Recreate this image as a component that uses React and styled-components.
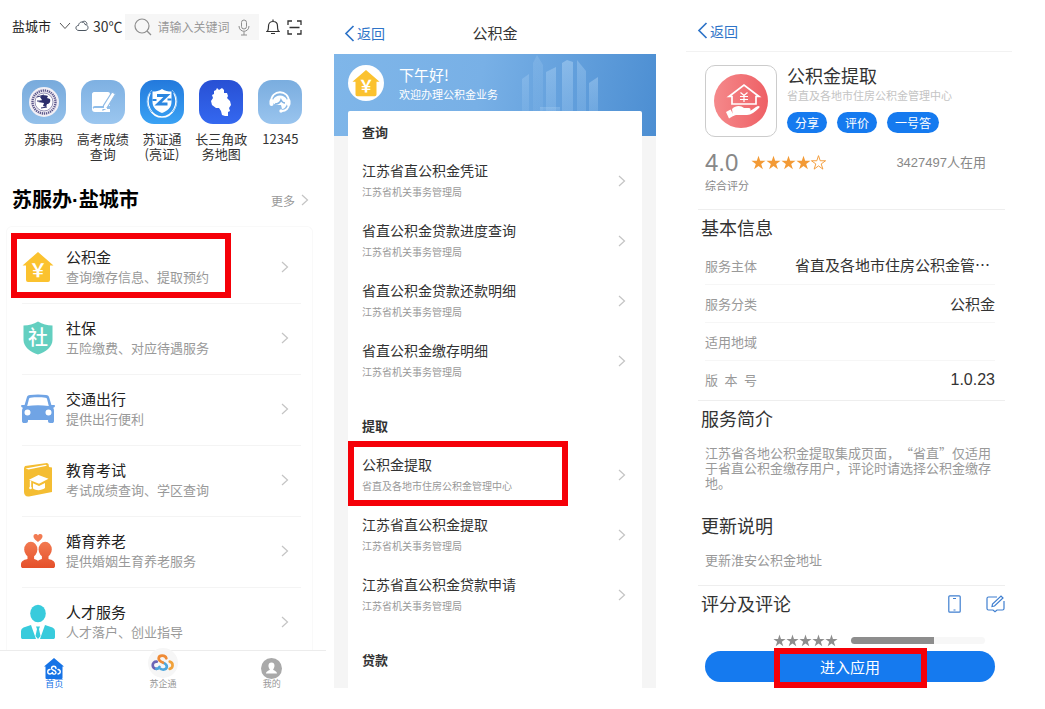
import React from "react";
import styled, { createGlobalStyle } from "styled-components";

const menus = [
  { title: "公积金", sub: "查询缴存信息、提取预约", icon: "house", marked: true },
  { title: "社保", sub: "五险缴费、对应待遇服务", icon: "shield" },
  { title: "交通出行", sub: "提供出行便利", icon: "car" },
  { title: "教育考试", sub: "考试成绩查询、学区查询", icon: "book" },
  { title: "婚育养老", sub: "提供婚姻生育养老服务", icon: "couple" },
  { title: "人才服务", sub: "人才落户、创业指导", icon: "person" },
];

const bureau = "江苏省机关事务管理局";

const fundGroups = [
  {
    name: "查询",
    items: [
      { title: "江苏省直公积金凭证", sub: bureau },
      { title: "省直公积金贷款进度查询", sub: bureau },
      { title: "省直公积金贷款还款明细", sub: bureau },
      { title: "省直公积金缴存明细", sub: bureau },
    ],
  },
  {
    name: "提取",
    items: [
      { title: "公积金提取", sub: "省直及各地市住房公积金管理中心", marked: true },
      { title: "江苏省直公积金提取", sub: bureau },
      { title: "江苏省直公积金贷款申请", sub: bureau },
    ],
  },
  { name: "贷款", items: [] },
];

const ChevronRight = ({ size = 12, color = "#c4c4c4" }) => (
  <svg width={size} height={size} viewBox="0 0 12 12" fill="none" stroke={color} strokeWidth="1.2">
    <path d="M3 1l5.5 5L3 11" />
  </svg>
);

const BackIcon = () => (
  <svg width="11" height="17" viewBox="0 0 11 17" fill="none" stroke="#2f74c8" strokeWidth="1.7">
    <path d="M9.5 1L2 8.5 9.5 16" />
  </svg>
);

const HouseIcon = ({ size = 32 }) => (
  <svg width={size} height={size} viewBox="0 0 32 32">
    <path d="M16 1L.5 14.500H4V29a2 2 0 002 2h20a2 2 0 002-2V14.500h3.500z" fill="#fbc22f" />
    <text x="16" y="26" textAnchor="middle" fontSize="18" fontWeight="700" fill="#fff" fontFamily="Noto Sans CJK SC, sans-serif">￥</text>
  </svg>
);

const menuIcons = {
  house: <HouseIcon />,
  shield: (
    <svg width="30" height="34" viewBox="0 0 30 34">
      <path d="M15 .5c4.500 2.700 9 4 14.500 4V19c0 7-7 12-14.500 14.500C7.500 31 .5 26 .5 19V4.500c5.500 0 10-1.300 14.500-4z" fill="#63cfc0" />
      <text x="15" y="24" textAnchor="middle" fontSize="20" fontWeight="500" fill="#fff" fontFamily="Noto Sans CJK SC, sans-serif">社</text>
    </svg>
  ),
  car: (
    <svg width="34" height="30" viewBox="0 0 34 30" fill="#70a4e5">
      <path fillRule="evenodd" d="M9 1c5-.8 11-.8 16 0 2 .3 2.800 1 3.200 2.600L30.400 11H33c1.500 0 1.300 2.500-.8 2.700.6 1 .8 2 .8 3.300V27c0 1.500-.8 2-2 2h-2c-1.400 0-2-.7-2-2v-1H7v1c0 1.300-.7 2-2 2H3.200c-1.400 0-2.200-.6-2.200-2V17c0-1.300.3-2.300.9-3.300C-.3 13.500-.3 11 1 11h2.600l2.200-7.400C6.200 2 7 1.300 9 1zm.5 2.800c-1 .1-1.400.5-1.600 1.400L6.200 12c7-1 14.600-1 21.600 0l-1.700-6.800c-.2-.9-.6-1.300-1.600-1.400-5-.6-10-.6-15 0zM6.500 15.500a3 3 0 100 6 3 3 0 000-6zm21 0a3 3 0 100 6 3 3 0 000-6z" />
    </svg>
  ),
  book: (
    <svg width="32" height="34" viewBox="0 0 32 34">
      <path d="M2 5l1-2L25 0l1.500 1L27 4l3 .5V29L7 33.500C4 34 2 32 2 29z" fill="#f4bd32" />
      <path d="M3.500 5.500l20-3.800 1.500 1L6.500 6.500z" fill="#fff" />
      <path d="M16.500 12L7 16.700l10 4 9.500-5zM11 20.300v5.300c3.500 2.500 8.500 2 12-.5V20l-6 3z" fill="#fff" />
      <path d="M8.500 17.500v7" stroke="#fff" strokeWidth="1.400" />
      <circle cx="8.500" cy="25" r="1.300" fill="#fff" />
    </svg>
  ),
  couple: (
    <svg width="34" height="36" viewBox="0 0 34 36">
      <defs>
        <linearGradient id="couple" gradientUnits="userSpaceOnUse" x1="0" y1="8" x2="0" y2="35">
          <stop offset="0" stopColor="#f27b52" />
          <stop offset="1" stopColor="#e5502a" />
        </linearGradient>
      </defs>
      <path d="M17 9c-3.500-2.600-4.500-4-4.500-5.700C12.500.5 16 .5 17 2.500c1-2 4.500-2 4.500.8 0 1.700-1 3.100-4.500 5.700z" fill="#f27b52" />
      <g fill="url(#couple)">
        <ellipse cx="9.800" cy="16.500" rx="6.600" ry="7.800" />
        <ellipse cx="24.200" cy="16.500" rx="6.600" ry="7.800" />
        <path d="M6.500 21h6.600v5c1.500.4 2.800.9 3.900 1.800 1.100-.9 2.400-1.400 3.900-1.800v-5h6.600v5c4.500 1 6.500 2.500 6.500 5.500V33c0 1.500-1 2-2 2H2c-1 0-2-.6-2-2v-1.500c0-3 2-4.500 6.500-5.500z" />
      </g>
    </svg>
  ),
  person: (
    <svg width="34" height="36" viewBox="0 0 34 36" fill="#38cbdc">
      <ellipse cx="17" cy="9.500" rx="7.800" ry="8.800" />
      <path d="M10 21L2.500 23.500Q0 24.500 0 27v6c0 1.500.7 2 2 2h13zM24 21l7.500 2.500Q34 24.500 34 27v6c0 1.500-.7 2-2 2H19zM15 22.500h4l-1 2.500 1.500 7L17 35l-2.500-3L16 25z" />
    </svg>
  ),
};

const CloudMark = ({ width, colors }) => (
  <svg width={width} viewBox="0 0 24 18" fill="none" strokeWidth="2.800" strokeLinecap="round">
    <path d="M6 8C.500 7.500.500 15.500 5.500 15.500" stroke={colors[0]} />
    <path d="M5.500 15.500c1.500 0 2.500-.8 3.300-2" stroke={colors[1]} />
    <path d="M10 15.500c3 1.500 6.500.5 6.500-2.500 0-2-1.500-3-4-4" stroke={colors[1]} />
    <path d="M16 4.500C15 .8 8 .8 8 4.800c0 2.200 2 3.200 4.500 4.200" stroke={colors[2]} />
    <path d="M19.500 8c4 1 4 6.500 0 7.500" stroke={colors[3]} />
  </svg>
);

const HealthTile = () => (
  <svg width="44" height="44" viewBox="0 0 44 44">
    <circle cx="22" cy="22" r="15" fill="#f2eff5" />
    <circle cx="22" cy="22" r="11.500" fill="none" stroke="#5d588c" strokeWidth="2.400" strokeDasharray="1.300 .8" />
    <circle cx="22" cy="22" r="9" fill="#fff" stroke="#56508a" strokeWidth=".6" />
    <path d="M18 17c2-2 6-2 8-1l-1 2 3 1c1 3-1 5-3 5l-1 3-3-1 1-3-6-1 4-2z" fill="#2c2e6c" />
    <path d="M15 17l7-2M19 28l6-1M15 21h4" stroke="#2c2e6c" />
  </svg>
);

const ExamTile = () => (
  <svg width="44" height="44" viewBox="0 0 44 44">
    <path d="M13 12h14a2 2 0 012 2v12H14c-3 0-3 3 0 3h15v3H14c-2 0-3-1-3-3V14c0-1 1-2 2-2z" fill="#fff" />
    <path d="M31 12l3.500 2-8.500 14-4 2 .5-4.500z" fill="#fff" stroke="#8fbbe6" strokeWidth="1.200" />
    <path d="M13 28.500h13" stroke="#fff" />
  </svg>
);

const LicenceTile = () => (
  <svg width="44" height="44" viewBox="0 0 44 44" fill="none">
    <path d="M10 13C4 25 12 37 22 37s18-12 12-24" stroke="#fff" strokeWidth="1.600" />
    <path d="M12 10C5 17 6 27 12 32M32 10c7 7 6 17 0 22" stroke="#8cc5f8" strokeWidth="1" />
    <path d="M22 9c3 2 6 2.500 9.500 2.500V22c0 6-4.500 9-9.500 11-5-2-9.500-5-9.500-11V11.500C16 11.500 19 11 22 9z" fill="#fff" />
    <path d="M17 15.500h10L18 24h9.500" stroke="#2b86e0" strokeWidth="2.800" />
    <path d="M12.500 20h4M27.500 19.500h4" stroke="#2b86e0" strokeWidth="2" />
  </svg>
);

const MapTile = () => (
  <svg width="44" height="44" viewBox="0 0 44 44" fill="#fff">
    <path d="M15 11l2-1 1-2 2 2 3-2 2 2 0 3 3 0 1 3-1 2 3 3 1 4-2 3 1 3-2 1 0 4-3 0-3-1-1-4-2-3-3 0-4-3-1-4 2-3-1-3 2-1z" />
  </svg>
);

const HotlineTile = () => (
  <svg width="44" height="44" viewBox="0 0 44 44" fill="none">
    <path d="M13 22c0-13 18-13 18 0v2c0 4-3 7-7 7" stroke="#fff" strokeWidth="1.800" />
    <path d="M15 20c2-6 12-6 14 0v4c-1 3-3 5-5 5l-1-4c-2 0-6 0-8-2z" fill="#fff" />
    <path d="M17 24c3 0 5-1 6-4 1 2 2 3 4 3" stroke="#82b3e3" strokeWidth="1.600" />
    <rect x="11.500" y="19" width="4" height="7" rx="2" fill="#fff" />
    <rect x="28.500" y="19" width="4" height="7" rx="2" fill="#fff" />
    <circle cx="23" cy="31" r="1.700" fill="#fff" />
  </svg>
);

const shortcuts = [
  { label: "苏康码", icon: <HealthTile />, from: "#78aadc", to: "#93c0ea" },
  { label: "高考成绩查询", icon: <ExamTile />, from: "#7eb0e2", to: "#9bc6ef" },
  { label: "苏证通\n(亮证)", icon: <LicenceTile />, from: "#2379dc", to: "#3aa2f4" },
  { label: "长三角政务地图", icon: <MapTile />, from: "#2850d4", to: "#3468f0" },
  { label: "12345", icon: <HotlineTile />, from: "#7aaddf", to: "#99c4ee" },
];

const Star = ({ size, color, hollow }) => (
  <svg width={size} height={size} viewBox="0 0 24 24">
    <path
      d="M12 1l2.700 8.200h8.600l-7 5.100 2.700 8.300-7-5.200-7 5.200 2.700-8.300-7-5.100h8.600z"
      fill={hollow ? "none" : color}
      stroke={color}
      strokeWidth={hollow ? 1.5 : 0}
    />
  </svg>
);

const Skyline = () => (
  <svg width="84" height="56" viewBox="0 0 84 56">
    <defs>
      <linearGradient id="tower" x1="0" y1="0" x2="0" y2="1">
        <stop offset="0" stopColor="#c5e2fb" stopOpacity=".6" />
        <stop offset="1" stopColor="#a4cdf3" stopOpacity=".45" />
      </linearGradient>
    </defs>
    <g fill="url(#tower)">
      <path d="M0 56V24l7-5v37z" opacity=".4" />
      <path d="M11 56V8l4-8 6 10v46z" opacity=".28" />
      <path d="M24 56V17l10-5v44z" opacity=".55" />
      <path d="M18 52h20v4H18z" opacity=".4" />
      <path d="M40 56V8l5-3 6 2v49z" opacity=".65" />
      <path d="M55 56V5l9 11v40z" opacity=".5" />
      <path d="M67 56V28l9-6v34z" opacity=".6" />
    </g>
  </svg>
);

const HandHouse = () => (
  <svg width="54" height="54" viewBox="0 0 54 54" fill="none" stroke="#fff">
    <defs>
      <linearGradient id="coral" x1="0" y1="0" x2="1" y2="0">
        <stop offset="0" stopColor="#f5898b" />
        <stop offset="1" stopColor="#ee6065" />
      </linearGradient>
    </defs>
    <circle cx="27" cy="27" r="27" fill="url(#coral)" stroke="none" />
    <path d="M15 22.500L30 11l15 11.500h-3V30H18v-7.500z" strokeWidth="1.700" />
    <path d="M26.500 18.500l3.500 3 3.500-3M30 21.500V28M26 22.500h8M26 25.500h8" strokeWidth="1.200" />
    <path d="M18 35c4-4 9-3.500 12-1h5c2 0 2 3 0 3h-6 6c4-1 6-4 9-5 2 0 2 1 1 2-4 4-8 7-12 7H22l-3 1z" fill="#fff" stroke="none" />
    <path d="M12 38l4.500-2.500 3.500 6-5 3z" fill="#fff" stroke="none" />
  </svg>
);

const Back = () => (
  <BackLink href="#">
    <BackIcon />
    返回
  </BackLink>
);

const HomeScreen = () => (
  <Home>
    <TopBar>
      <City type="button">
        盐城市
        <svg width="12" height="8" viewBox="0 0 12 8" fill="none" stroke="#555">
          <path d="M1 1l5 5.500L11 1" />
        </svg>
      </City>
      <Weather>
        <svg width="14" height="12" viewBox="0 0 14 12" fill="none" stroke="#4b5560">
          <path d="M4 10.500c-4 0-4-5-.5-5C4 1 9.500 1 10 4.500c4 .3 4 6 0 6z" />
          <path d="M7 2.500c2-2.500 5-1 5 2" />
        </svg>
        30℃
      </Weather>
      <Search>
        <svg width="18" height="18" viewBox="0 0 18 18" fill="none" stroke="#8e8e8e" strokeWidth="1.200">
          <circle cx="8" cy="8" r="7" />
          <path d="M13 13l4 4" />
        </svg>
        <SearchInput aria-label="搜索" placeholder="请输入关键词" />
        <svg width="12" height="17" viewBox="0 0 12 17" fill="none" stroke="#8e8e8e">
          <rect x="3.500" y="1" width="5" height="9" rx="2.500" />
          <path d="M1 7c0 7 10 7 10 0M6 12.500V16M3 16h6" />
        </svg>
      </Search>
      <IconButton type="button" aria-label="消息">
        <svg width="14" height="16" viewBox="0 0 14 16" fill="none" stroke="#333" strokeWidth="1.200">
          <path d="M1 12.500c1.500-1 1.500-2 1.500-5.500 0-6 9-6 9 0 0 3.500 0 4.500 1.500 5.500zM7 2.500V.5M5 14.500h4" />
        </svg>
      </IconButton>
      <IconButton type="button" aria-label="扫一扫">
        <svg width="15" height="15" viewBox="0 0 15 15" fill="none" stroke="#333" strokeWidth="1.300">
          <path d="M1 5V1h4M10 1h4v4M14 10v4h-4M5 14H1v-4M2.500 7.500h10" />
        </svg>
      </IconButton>
    </TopBar>

    <Shortcuts>
      {shortcuts.map((s) => (
        <Shortcut href="#" key={s.label}>
          <Tile $from={s.from} $to={s.to}>{s.icon}</Tile>
          {s.label}
        </Shortcut>
      ))}
    </Shortcuts>

    <HomeHeading>
      <h1>苏服办·盐城市</h1>
      <MoreLink href="#">更多 <ChevronRight /></MoreLink>
    </HomeHeading>

    <MenuCard>
      {menus.map((m) => (
        <MenuRow href="#" key={m.title}>
          <MenuIcon>{menuIcons[m.icon]}</MenuIcon>
          <RowText>
            <MenuTitle>{m.title}</MenuTitle>
            <MenuSub>{m.sub}</MenuSub>
          </RowText>
          <ChevronRight />
          {m.marked && <MenuMark />}
        </MenuRow>
      ))}
    </MenuCard>

    <TabBar>
      <Tab href="#" $active>
        <svg width="20" height="21" viewBox="0 0 20 21">
          <path d="M10 0L0 8.500h1.500V20q0 1 1 1h15q1 0 1-1V8.500H20z" fill="#1673e6" />
          <g fill="none" stroke="#fff" strokeWidth="1.400" strokeLinecap="round">
            <path d="M6 11.500c-3 0-3 4.500 0 4.500 1.500 0 2-1 2.500-1.500M12 10.500c0-3-4.500-3-4.500 0 0 2 4.500 1.500 4.500 4 0 2-2.500 2-3.500 1M14 11.500c3 .5 3 4 0 4.500" />
          </g>
        </svg>
        首页
      </Tab>
      <Tab href="#">
        <RoundLogo>
          <CloudMark width="23" colors={["#6b64b5", "#4da6dc", "#ef8b36", "#f0a23b"]} />
        </RoundLogo>
        苏企通
      </Tab>
      <Tab href="#">
        <svg width="21" height="21" viewBox="0 0 21 21">
          <circle cx="10.500" cy="10.500" r="10.500" fill="#a9a9a9" />
          <path d="M10.500 4.500c4 0 3.500 5 1.500 7 .5 1 4 1.500 4 4H5c0-2.500 3.500-3 4-4-2-2-2.500-7 1.500-7z" fill="#fff" />
        </svg>
        我的
      </Tab>
    </TabBar>
  </Home>
);

const FundScreen = () => (
  <Fund>
    <FundHeader>
      <Back />
      <h2>公积金</h2>
    </FundHeader>
    <Banner>
      <Avatar><HouseIcon size={28} /></Avatar>
      <div>
        <Greeting>下午好!</Greeting>
        <Welcome>欢迎办理公积金业务</Welcome>
      </div>
      <SkylineArt><Skyline /></SkylineArt>
    </Banner>
    <FundBody>
      <FundCard>
        {fundGroups.map((g) => (
          <FundGroup key={g.name}>
            <h3>{g.name}</h3>
            {g.items.map((item) => (
              <FundRow href="#" key={item.title}>
                <RowText>
                  <FundTitle>{item.title}</FundTitle>
                  <FundSub>{item.sub}</FundSub>
                </RowText>
                <ChevronRight />
                {item.marked && <FundMark />}
              </FundRow>
            ))}
          </FundGroup>
        ))}
      </FundCard>
    </FundBody>
  </Fund>
);

const DetailScreen = () => (
  <Detail>
    <DetailHeader><Back /></DetailHeader>
    <Section>
      <AppInfo>
        <AppIcon><HandHouse /></AppIcon>
        <div>
          <AppName>公积金提取</AppName>
          <AppOwner>省直及各地市住房公积金管理中心</AppOwner>
          <Pills>
            <Pill type="button">分享</Pill>
            <Pill type="button">评价</Pill>
            <Pill type="button">一号答</Pill>
          </Pills>
        </div>
      </AppInfo>
      <Rating>
        <Score>4.0</Score>
        <Stars>
          {[0, 1, 2, 3, 4].map((n) => (
            <Star key={n} size={15} color="#f39a35" hollow={n === 4} />
          ))}
        </Stars>
        <Users>3427497人在用</Users>
      </Rating>
      <ScoreLabel>综合评分</ScoreLabel>
    </Section>

    <Section>
      <SectionTitle>基本信息</SectionTitle>
      <Facts>
        <Fact><dt>服务主体</dt><FactValue $start>省直及各地市住房公积金管…</FactValue></Fact>
        <Fact><dt>服务分类</dt><FactValue>公积金</FactValue></Fact>
        <Fact><dt>适用地域</dt><FactValue /></Fact>
        <Fact><SpacedLabel><span>版</span><span>本</span><span>号</span></SpacedLabel><FactValue $latin>1.0.23</FactValue></Fact>
      </Facts>
    </Section>

    <Section>
      <SectionTitle>服务简介</SectionTitle>
      <Copy>江苏省各地公积金提取集成页面，“省直”仅适用于省直公积金缴存用户，评论时请选择公积金缴存地。</Copy>
      <SectionTitle>更新说明</SectionTitle>
      <Copy>更新淮安公积金地址</Copy>
    </Section>

    <Reviews>
      <SectionTitle>评分及评论</SectionTitle>
      <IconButton type="button" aria-label="手机">
        <svg width="13" height="18" viewBox="0 0 13 18" fill="none" stroke="#3f7fd0" strokeWidth="1.200">
          <rect x=".8" y=".8" width="11.400" height="16.400" rx="1" />
          <path d="M5 3.500h3M5.500 15h2" />
        </svg>
      </IconButton>
      <IconButton type="button" aria-label="写评论">
        <svg width="19" height="18" viewBox="0 0 19 18" fill="none" stroke="#3f7fd0" strokeWidth="1.200">
          <path d="M11 2H2.500Q1 2 1 3.500v10Q1 15 2.500 15H7l2 1.800 2-1.800h5.500q1.500 0 1.500-1.500V6" />
          <path d="M6 11.500l.5-2.500 8.500-8 2 2-8.500 8z" />
        </svg>
      </IconButton>
    </Reviews>
    <Breakdown>
      <Stars>
        {[0, 1, 2, 3, 4].map((n) => (
          <Star key={n} size={13} color="#8d8d8d" />
        ))}
      </Stars>
      <Meter><MeterFill style={{ width: "62%" }} /></Meter>
    </Breakdown>
    <EnterWrap>
      <EnterButton type="button">进入应用</EnterButton>
      <EnterMark />
    </EnterWrap>
  </Detail>
);

const App = () => (
  <>
    <GlobalStyle />
    <Page lang="zh-CN">
      <HomeScreen />
      <FundScreen />
      <DetailScreen />
    </Page>
  </>
);

export default App;

const GlobalStyle = createGlobalStyle`
*{
  box-sizing: border-box;
}
body{
  margin: 0;
  background-color: #fff;
  color: #333;
  font-family: "Noto Sans CJK SC", "Noto Sans", sans-serif;
}
h1, h2, h3, p, dl, dd, dt{
  margin: 0;
  font-weight: 400;
}
a{
  color: inherit;
  text-decoration: none;
}
button, input{
  font-family: inherit;
  border: none;
  padding: 0;
  background: none;
}
svg{
  flex-shrink: 0;
  display: block;
}
`
const Page = styled.main`
display: grid;
grid-template-columns: 334fr 352fr 359fr;
`
const Screen = styled.section`
display: flex;
flex-direction: column;
min-width: 0;
`
const Home = styled(Screen)`
padding-right: 8px;
`
const TopBar = styled.div`
display: flex;
align-items: center;
padding: 14px 24px 0 12px;
height: 40px;
`
const City = styled.button`
display: flex;
align-items: center;
gap: 8px;
padding-bottom: 2px;
font-size: 13px;
line-height: 24px;
color: #222;
`
const Weather = styled.span`
display: flex;
align-items: center;
gap: 4px;
margin-left: 4px;
padding-bottom: 2px;
font-size: 14px;
line-height: 24px;
white-space: nowrap;
`
const Search = styled.label`
flex: 1;
display: flex;
align-items: center;
gap: 6px;
min-width: 0;
height: 26px;
margin: 0 7px 0 2px;
padding: 0 9px;
background-color: #f6f6f6;
`
const SearchInput = styled.input`
flex: 1;
min-width: 0;
padding-bottom: 2px;
font-size: 12px;
outline: none;
&::placeholder{
  color: #999;
}
`
const IconButton = styled.button`
display: flex;
& + &{
  margin-left: 7px;
}
`
const Shortcuts = styled.nav`
display: grid;
grid-template-columns: repeat(5, 1fr);
padding: 40px 16px 0 14px;
`
const Shortcut = styled.a`
display: flex;
flex-direction: column;
align-items: center;
font-size: 13px;
line-height: 15px;
text-align: center;
white-space: pre-line;
`
const Tile = styled.span`
width: 44px;
height: 44px;
margin-bottom: 7px;
border-radius: 14px;
background: linear-gradient(${p => p.$from}, ${p => p.$to});
`
const HomeHeading = styled.div`
display: flex;
justify-content: space-between;
align-items: center;
padding: 24px 15px 11px 12px;
h1{
  font-family: "Liberation Sans", "Noto Sans CJK SC", sans-serif;
  font-size: 20px;
  line-height: 30px;
  font-weight: 700;
  color: #000;
}
`
const MoreLink = styled.a`
display: flex;
align-items: center;
gap: 4px;
font-size: 12px;
color: #999;
`
const MenuCard = styled.div`
margin: 0 13px 0 6px;
padding: 5px 11px 0 15px;
border: 1px solid #f9f9f9;
border-bottom: none;
border-radius: 6px 6px 0 0;
`
const Row = styled.a`
position: relative;
display: flex;
align-items: center;
`
const MenuRow = styled(Row)`
height: 71px;
padding: 0 10px 2px 0;
& + &{
  border-top: 1px solid #f4f4f4;
}
`
const MenuIcon = styled.span`
display: flex;
justify-content: center;
width: 32px;
margin-right: 12px;
`
const RowText = styled.div`
flex: 1;
min-width: 0;
white-space: nowrap;
`
const MenuTitle = styled.p`
font-size: 15px;
line-height: 20px;
color: #222;
`
const MenuSub = styled.p`
font-size: 13px;
line-height: 20px;
color: #999;
`
const Mark = styled.span`
position: absolute;
border: 6px solid #f50008;
pointer-events: none;
`
const MenuMark = styled(Mark)`
top: 1px;
left: -11px;
width: 220px;
height: 65px;
`
const TabBar = styled.nav`
position: relative;
display: grid;
grid-template-columns: repeat(3, 1fr);
height: 39px;
margin-top: -8px;
background-color: #fff;
border-top: 1px solid #ececec;
`
const Tab = styled.a`
display: flex;
flex-direction: column;
align-items: center;
justify-content: flex-end;
height: 38px;
font-size: 9px;
line-height: 10px;
color: ${p => p.$active ? '#1673e6' : '#999'};
`
const RoundLogo = styled.span`
display: flex;
flex-shrink: 0;
align-items: center;
justify-content: center;
width: 30px;
height: 30px;
margin-bottom: 1px;
border-radius: 50%;
background-color: #f6f6f6;
`
const BackLink = styled.a`
display: flex;
align-items: center;
gap: 2px;
font-size: 14px;
line-height: 20px;
color: #2f74c8;
`
const Fund = styled(Screen)`
padding-right: 30px;
`
const FundHeader = styled.header`
display: grid;
grid-template-columns: 1fr auto 1fr;
align-items: center;
height: 54px;
padding: 12px 10px 0;
h2{
  font-size: 15px;
  line-height: 20px;
}
`
const Banner = styled.div`
position: relative;
display: flex;
align-items: flex-start;
gap: 15px;
height: 82px;
padding: 11px 14px;
color: #fff;
background: linear-gradient(100deg, #7fb6e9 0%, #78b0e6 45%, #4c8ed2 100%);
`
const Avatar = styled.span`
display: flex;
align-items: center;
justify-content: center;
width: 36px;
height: 36px;
border-radius: 50%;
background-color: #fff;
`
const Greeting = styled.p`
font-size: 15px;
line-height: 20px;
`
const Welcome = styled.p`
font-size: 11px;
line-height: 18px;
`
const SkylineArt = styled.span`
position: absolute;
right: 50px;
bottom: 25px;
`
const FundBody = styled.div`
padding: 0 14px;
background-color: #f5f5f5;
`
const FundCard = styled.div`
position: relative;
margin-top: -25px;
padding: 10px 14px 9px;
background-color: #fff;
border-radius: 2px 2px 0 0;
`
const FundGroup = styled.div`
& + &{
  margin-top: 24px;
}
h3{
  padding-bottom: 8px;
  font-size: 13px;
  line-height: 22px;
  font-weight: 700;
}
`
const FundRow = styled(Row)`
height: 60px;
`
const FundTitle = styled.p`
font-size: 14px;
line-height: 21px;
`
const FundSub = styled.p`
font-size: 10px;
line-height: 21px;
color: #999;
`
const FundMark = styled(Mark)`
top: -4px;
left: -14px;
width: 220px;
height: 65px;
`
const Detail = styled(Screen)`
padding-right: 33px;
`
const DetailHeader = styled.header`
display: flex;
align-items: center;
height: 52px;
padding: 10px 11px 0;
border-bottom: 1px solid #f2f2f2;
`
const Section = styled.section`
margin: 0 7px 0 12px;
padding: 0 10px 0 7px;
border-bottom: 1px solid #eee;
`
const AppInfo = styled.div`
display: flex;
gap: 10px;
padding-top: 13px;
white-space: nowrap;
`
const AppIcon = styled.span`
display: flex;
align-items: center;
justify-content: center;
width: 72px;
height: 72px;
border: 1px solid #ccc;
border-radius: 10px;
`
const AppName = styled.h2`
font-size: 18px;
line-height: 20px;
`
const AppOwner = styled.p`
font-size: 11px;
line-height: 20px;
color: #c4c4c4;
`
const Pills = styled.div`
display: flex;
gap: 10px;
padding-top: 7px;
`
const Pill = styled.button`
height: 21px;
padding: 0 8px;
border-radius: 11px;
background-color: #157aef;
color: #fff;
font-size: 12px;
line-height: 20px;
`
const Rating = styled.div`
display: flex;
align-items: center;
padding: 11px 9px 0 0;
height: 40px;
`
const Score = styled.span`
margin-right: 13px;
font-family: "Liberation Sans", sans-serif;
font-size: 24px;
line-height: 28px;
color: #888;
`
const Stars = styled.span`
display: flex;
`
const Users = styled.span`
margin-left: auto;
font-family: "Liberation Sans", "Noto Sans CJK SC", sans-serif;
font-size: 13px;
line-height: 20px;
color: #888;
`
const ScoreLabel = styled.p`
padding-bottom: 15px;
font-size: 11px;
line-height: 17px;
color: #888;
`
const SectionTitle = styled.h2`
margin-left: -4px;
padding-bottom: 2px;
font-size: 18px;
line-height: 34px;
`
const Facts = styled.dl`
padding-bottom: 2px;
`
const Fact = styled.div`
display: grid;
grid-template-columns: 90px 1fr;
align-items: center;
height: 38px;
& + &{
  border-top: 1px solid #f6f6f6;
}
dt{
  font-size: 13px;
  color: #999;
}
`
const SpacedLabel = styled.dt`
display: flex;
justify-content: space-between;
width: 52px;
`
const FactValue = styled.dd`
font-family: ${p => p.$latin ? '"Liberation Sans", sans-serif' : 'inherit'};
font-size: ${p => p.$latin ? '16px' : '15px'};
line-height: 22px;
text-align: ${p => p.$start ? 'left' : 'right'};
white-space: nowrap;
`
const Copy = styled.p`
padding: 8px 0 18px;
font-size: 13px;
line-height: 15px;
color: #999;
text-spacing-trim: space-all;
`
const Reviews = styled.div`
display: flex;
align-items: center;
margin: 0 7px 0 19px;
${SectionTitle}{
  margin-right: auto;
}
${IconButton} + ${IconButton}{
  margin-left: 25px;
}
`
const Breakdown = styled.div`
display: flex;
align-items: center;
justify-content: flex-end;
gap: 13px;
height: 16px;
margin: 10px 27px 3px;
`
const Meter = styled.span`
width: 134px;
height: 7px;
border-radius: 4px;
background-color: #f7f7f7;
`
const MeterFill = styled.span`
display: block;
height: 7px;
border-radius: 4px 0 0 4px;
background-color: #8d8d8d;
`
const EnterWrap = styled.div`
position: relative;
margin: 0 17px 0 19px;
`
const EnterButton = styled.button`
display: block;
width: 100%;
height: 31px;
border-radius: 16px;
background-color: #157aef;
color: #fff;
font-size: 15px;
line-height: 30px;
`
const EnterMark = styled(Mark)`
top: -3px;
right: 68px;
bottom: -6px;
left: 69px;
`
